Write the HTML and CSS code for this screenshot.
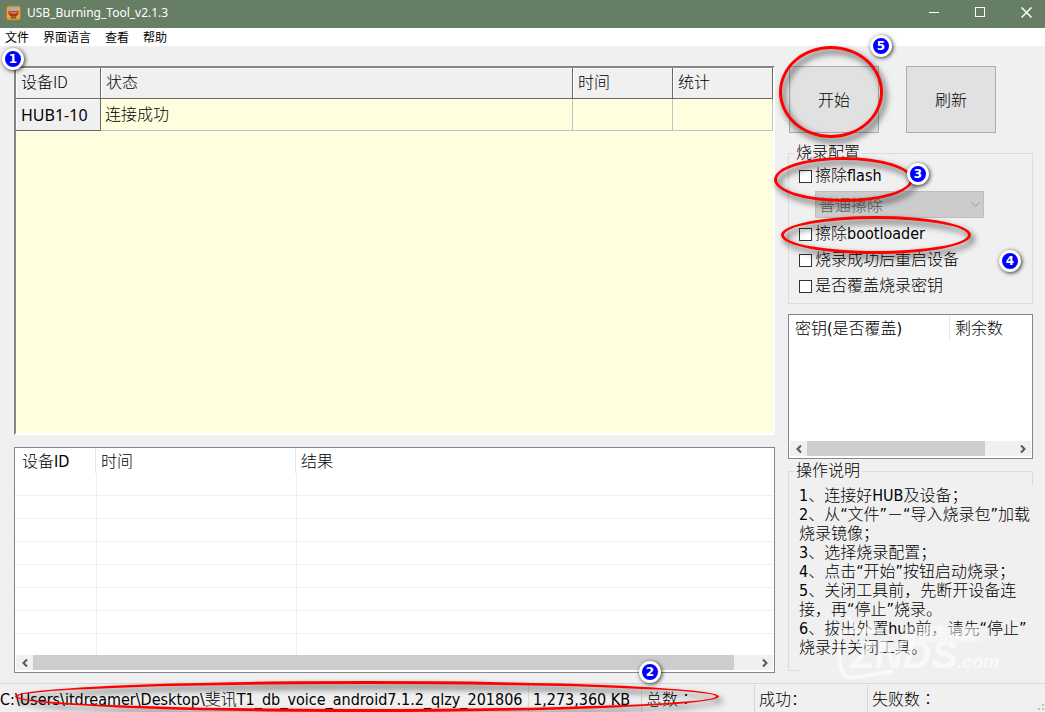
FILE: index.html
```html
<!DOCTYPE html>
<html lang="zh-CN">
<head>
<meta charset="utf-8">
<title>USB_Burning_Tool_v2.1.3</title>
<link rel="stylesheet" href="styles.css">
</head>
<body>
<header class="titlebar">
  <svg class="app-icon" viewBox="0 0 16 16" aria-hidden="true">
    <rect x="0" y="0" width="16" height="16" rx="3" fill="#a87c3a"/>
    <rect x="1" y="1" width="14" height="14" rx="2" fill="#dba850"/>
    <ellipse cx="8" cy="7.500" rx="5.500" ry="4.500" fill="#b5301a"/>
    <path d="M3 6a5 4 0 0 1 10 0z" fill="#9fb0c4"/>
    <path d="M3 7h10l-2 1.500h-2l-1 1-1-1H5z" fill="#f07a2c"/>
    <rect x="5" y="12" width="6" height="2" fill="#8a5a22"/>
  </svg>
  <h1 class="title">USB_Burning_Tool_v2.1.3</h1>
  <div class="window-controls">
    <button type="button" aria-label="最小化"><svg viewBox="0 0 11 11"><path d="M0 5.500H10"/></svg></button>
    <button type="button" aria-label="最大化"><svg viewBox="0 0 11 11"><rect x=".5" y=".5" width="9" height="9"/></svg></button>
    <button type="button" aria-label="关闭"><svg class="close" viewBox="0 0 11 11"><path d="M.5 .5l10 10M10.500 .5l-10 10"/></svg></button>
  </div>
</header>
<nav class="menubar">
  <button type="button">文件</button>
  <button type="button">界面语言</button>
  <button type="button">查看</button>
  <button type="button">帮助</button>
</nav>

<main class="workspace">
  <div class="left">
    <section class="device-panel">
      <table class="device-table">
        <colgroup><col class="col-id"><col><col class="col-num"><col class="col-num"></colgroup>
        <thead><tr><th>设备ID</th><th>状态</th><th>时间</th><th>统计</th></tr></thead>
        <tbody><tr><th scope="row">HUB1-10</th><td>连接成功</td><td></td><td></td></tr></tbody>
      </table>
      <span class="badge badge-1">1</span>
    </section>
    <section class="list log-list">
      <div class="list-body">
        <table class="log-table">
          <colgroup><col class="col-id"><col class="col-time"><col></colgroup>
          <thead><tr><th>设备ID</th><th>时间</th><th>结果</th></tr></thead>
          <tbody>
            <tr><td></td><td></td><td></td></tr>
            <tr><td></td><td></td><td></td></tr>
            <tr><td></td><td></td><td></td></tr>
            <tr><td></td><td></td><td></td></tr>
            <tr><td></td><td></td><td></td></tr>
            <tr><td></td><td></td><td></td></tr>
            <tr><td></td><td></td><td></td></tr>
            <tr><td></td><td></td><td></td></tr>
          </tbody>
        </table>
      </div>
      <div class="scrollbar">
        <button type="button" aria-label="向左滚动"><svg viewBox="0 0 6 8"><path d="M5 .5L1.500 4L5 7.500"/></svg></button>
        <div class="track"><div class="thumb thumb-log"></div></div>
        <button type="button" aria-label="向右滚动"><svg viewBox="0 0 6 8"><path d="M1 .5L4.500 4L1 7.500"/></svg></button>
      </div>
    </section>
  </div>

  <div class="right">
    <div class="actions">
      <div class="action">
        <button type="button" class="push">开始</button>
        <span class="ring ring-start"></span>
        <span class="badge badge-5">5</span>
      </div>
      <button type="button" class="push">刷新</button>
    </div>

    <fieldset class="group config">
      <legend>烧录配置</legend>
      <label class="check"><input type="checkbox">擦除flash</label>
      <div class="select-wrap">
        <select class="erase-mode" aria-label="擦除方式" disabled><option>普通擦除</option></select>
        <svg viewBox="0 0 9 6"><path d="M.5 .5l4 4l4-4"/></svg>
      </div>
      <label class="check"><input type="checkbox">擦除bootloader</label>
      <label class="check"><input type="checkbox">烧录成功后重启设备</label>
      <label class="check"><input type="checkbox">是否覆盖烧录密钥</label>
      <span class="ring ring-flash"></span>
      <span class="ring ring-boot"></span>
      <span class="badge badge-3">3</span>
      <span class="badge badge-4">4</span>
    </fieldset>

    <section class="list key-list">
      <div class="list-body">
        <table class="key-table">
          <colgroup><col class="col-key"><col></colgroup>
          <thead><tr><th>密钥(是否覆盖)</th><th>剩余数</th></tr></thead>
        </table>
      </div>
      <div class="scrollbar">
        <button type="button" aria-label="向左滚动"><svg viewBox="0 0 6 8"><path d="M5 .5L1.500 4L5 7.500"/></svg></button>
        <div class="track"><div class="thumb thumb-key"></div></div>
        <button type="button" aria-label="向右滚动"><svg viewBox="0 0 6 8"><path d="M1 .5L4.500 4L1 7.500"/></svg></button>
      </div>
    </section>

    <fieldset class="group help">
      <legend>操作说明</legend>
      <p class="help-text">1、连接好HUB及设备；<br>2、从“文件”－“导入烧录包”加载<br>烧录镜像；<br>3、选择烧录配置；<br>4、点击“开始”按钮启动烧录；<br>5、关闭工具前，先断开设备连<br>接，再“停止”烧录。<br>6、拔出外置hub前，请先“停止”<br>烧录并关闭工具。</p>
      <div class="watermark">
        <svg viewBox="0 0 162 66" aria-hidden="true">
          <path d="M12 1L24 17M42 8L26 17M4 26Q3 15 14 17L48 16M4 26Q3 50 8 58Q11 65 30 61L58 56"/>
        </svg>
        <span class="wm-cn">智能电视网</span>
        <span class="wm-name">ZNDS<small>.com</small></span>
      </div>
    </fieldset>
  </div>
</main>

<footer class="statusbar">
  <span class="cell cell-path">C:\Users\itdreamer\Desktop\斐讯T1_db_voice_android7.1.2_qlzy_201806</span>
  <span class="cell cell-stat">1,273,360 KB</span>
  <span class="cell cell-stat wide-colon" lang="zh-TW">总数：</span>
  <span class="cell cell-stat">成功：</span>
  <span class="cell cell-last wide-colon" lang="zh-TW">失败数：</span>
  <svg class="grip" viewBox="0 0 8 8" aria-hidden="true"><path d="M5 0h2v2h-2zM5 4h2v2h-2zM1 4h2v2h-2z"/></svg>
  <span class="ring ring-path"></span>
  <span class="badge badge-2">2</span>
</footer>
</body>
</html>
```
FILE: styles.css
```css
* { box-sizing: border-box; }

body {
  margin: 0;
  min-height: 100vh;
  display: flex;
  flex-direction: column;
  overflow: hidden;
  background: #f0f0f0;
  color: #000;
  font: 300 16px/20px "DejaVu Sans Condensed", "Noto Sans CJK SC", sans-serif;
}

button, select, input { font: inherit; color: inherit; }
button { margin: 0; padding: 0; border: 0; background: none; }
svg { display: block; }
table { width: 100%; border-collapse: separate; border-spacing: 0; table-layout: fixed; }
th, td { text-align: left; font-weight: inherit; white-space: nowrap; }

/* Window frame */
.titlebar {
  height: 28px;
  display: flex;
  align-items: center;
  gap: 6px;
  padding-left: 6px;
  padding-bottom: 3px;
  background: #657e64;
  color: #fff;
}
.app-icon { width: 15px; height: 16px; }
.title { margin: 0; flex: 1; font: 400 12px/16px "Noto Sans", sans-serif; }
.window-controls { display: flex; gap: 8px; }
.window-controls button { width: 38px; height: 24px; display: grid; place-items: center; }
.window-controls svg { width: 11px; height: 11px; fill: none; stroke: #fff; }
.window-controls .close { stroke-width: 1.5; }

.menubar {
  height: 18px;
  display: flex;
  gap: 14px;
  padding-left: 5px;
  background: #fff;
  font: 400 12px/18px "Noto Sans CJK SC", sans-serif;
}

/* Main area */
.workspace {
  flex: 1;
  display: grid;
  grid-template-columns: 1fr 245px;
  gap: 13px;
  padding: 20px 12px 10px 14px;
}
.left { display: grid; grid-template-rows: 1fr 226px; gap: 12px; min-width: 0; }
.right { display: flex; flex-direction: column; gap: 10px; }

.device-panel {
  position: relative;
  background: #ffffdf;
  border: 2px solid;
  border-color: #868686 #fff #fff #868686;
}
.device-table { font-family: Roboto, "Noto Sans CJK SC", sans-serif; }
.device-table .col-id { width: 85px; }
.device-table .col-num { width: 100px; }
.device-table th, .device-table td { height: 32px; padding: 0 5px; border: 1px solid #c0c0c0; border-width: 0 1px 1px 0; }
.device-table td { padding-left: 4px; }
.device-table th { background: #f0f0f0; border-color: #696969; box-shadow: inset 1px 1px #fff; }
.device-table thead th { height: 31px; }
.device-table tbody th { font-family: "Noto Sans", sans-serif; font-weight: 400; }

.list {
  display: flex;
  flex-direction: column;
  padding: 0 1px 2px 0;
  background: #fff;
  border: 1px solid #828790;
}
.list-body { flex: 1; height: 0; overflow: hidden; }
.log-table .col-id { width: 81px; }
.log-table .col-time { width: 200px; }
.list th { height: 25px; padding: 2px 7px 0; border-right: 1px solid #e5e5e5; }
.list th:last-child { border-right: 0; }
.list th + th { padding-left: 5px; }
.list td { height: 23px; padding: 0; border-bottom: 1px solid #f0f0f0; }
.list td + td { border-left: 1px solid #f0f0f0; }
.key-table .col-key { width: 161px; }
.key-list th { padding-left: 6px; }
.key-list { height: 145px; }

.scrollbar { height: 15px; display: flex; margin-left: 1px; background: #f0f0f0; }
.scrollbar button { width: 17px; display: grid; place-items: center; }
.scrollbar svg { width: 6px; height: 8px; fill: none; stroke: #555; stroke-width: 2; }
.track { flex: 1; }
.thumb { height: 100%; background: #cdcdcd; }
.thumb-log { width: 97%; }
.thumb-key { width: 86%; }

/* Right column */
.actions { display: flex; gap: 27px; padding-left: 1px; }
.action { position: relative; }
.push { display: block; width: 90px; height: 67px; padding-top: 2px; background: #e1e1e1; border: 1px solid #adadad; }

.group { position: relative; min-width: 0; margin: 0; padding: 0 10px 4px; border: 1px solid #dcdcdc; }
.group legend { margin-left: -5px; padding: 0 2px; }
.check { display: flex; align-items: center; gap: 3px; height: 26px; }
.check input {
  appearance: none;
  width: 13px;
  height: 13px;
  margin: 0;
  background: #fff;
  border: 1px solid #333;
}
.select-wrap { position: relative; width: 169px; margin: 2px 0 3px 16px; }
.erase-mode {
  appearance: none;
  display: block;
  width: 100%;
  height: 27px;
  padding: 2px 3px 0;
  border: 1px solid #bfbfbf;
  border-radius: 0;
  background: #ccc;
  color: #606060;
  opacity: 1;
}
.select-wrap svg { position: absolute; right: 4px; top: 11px; width: 9px; height: 6px; fill: none; stroke: #9a9a9a; }

.help { margin-top: -8px; padding: 4px 0 0 10px; }
.help-text {
  position: relative;
  margin: 0 -1px -1px 0;
  min-height: 186px;
  padding-top: 1px;
  background: #f0f0f0;
  line-height: 19px;
  white-space: nowrap;
}

/* Site watermark laid over the instructions */
.watermark { position: absolute; left: 46px; bottom: -11px; width: 162px; height: 66px; color: #fff; opacity: 0.6; pointer-events: none; }
.watermark svg { position: absolute; inset: 0; fill: none; stroke: #fff; stroke-width: 4; }
.wm-cn { position: absolute; left: 66px; top: 10px; padding: 0 2px; border-radius: 3px; background: rgba(255, 255, 255, 0.4); font-size: 15px; font-weight: 700; line-height: 18px; }
.wm-name { position: absolute; left: 16px; bottom: 2px; font: italic 700 39px/34px "Liberation Sans", sans-serif; }
.wm-name small { font-size: 18px; }

/* Status bar */
.statusbar {
  position: relative;
  height: 29px;
  display: flex;
  padding-top: 1px;
  border-top: 1px solid #d7d7d7;
  white-space: nowrap;
}
.cell { padding: 4px 0 0 4px; border-right: 1px solid #d7d7d7; line-height: 22px; overflow: hidden; }
.cell-path { flex: 1; min-width: 0; padding-left: 0; }
.cell-stat { width: 113px; }
.cell-last { width: 177px; border-right: 0; }
.wide-colon { font-family: "DejaVu Sans Condensed", "Noto Sans CJK TC", sans-serif; }
.grip { position: absolute; right: 0; bottom: 0; width: 8px; height: 8px; fill: #bfbfbf; }

/* Callouts */
.ring {
  position: absolute;
  border: 3px solid #f00;
  border-radius: 50%;
  filter: drop-shadow(3px 4px 3px rgba(0, 0, 0, 0.8));
  pointer-events: none;
  z-index: 1;
}
.ring-start { left: -10px; top: -20px; width: 104px; height: 92px; }
.ring-flash { left: -15px; top: -6px; width: 139px; height: 45px; }
.ring-boot { left: -8px; top: 53px; width: 190px; height: 38px; }
.ring-path { left: 15px; top: -3px; width: 704px; height: 31px; }
.badge {
  position: absolute;
  width: 22px;
  height: 22px;
  border: 3px solid #fff;
  border-radius: 50%;
  background: #00f;
  box-shadow: 1px 1px 4px rgba(0, 0, 0, 0.8);
  color: #fff;
  font: 700 12px/16px "DejaVu Sans", sans-serif;
  text-align: center;
  z-index: 2;
}
.badge-1 { left: -14px; top: -20px; }
.badge-2 { left: 639px; top: -23px; }
.badge-3 { left: 118px; top: 0; }
.badge-4 { left: 210px; top: 87px; }
.badge-5 { left: 81px; top: -31px; }
```
